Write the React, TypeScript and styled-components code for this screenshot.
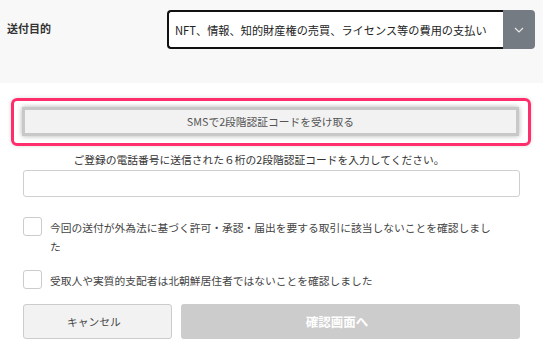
import React from "react";
import styled, { createGlobalStyle } from "styled-components";

const Global = createGlobalStyle`
  html, body { margin: 0; padding: 0; background: #ffffff; }
  body { font-family: "Noto Sans CJK JP", "Noto Sans", sans-serif; color: #333; }
  * { box-sizing: border-box; }
`;

const TopSection = styled.div`
  height: 83px;
  background: #f8f8f8;
  display: flex;
  align-items: flex-start;
  padding: 10px 8px 0 7px;
`;

const Label = styled.div`
  width: 160px;
  font-size: 11px;
  font-weight: 700;
  color: #333;
  line-height: 18px;
  margin-top: 9px;
`;

const SelectWrap = styled.div`
  display: flex;
  width: 368px;
  height: 39px;
`;

const SelectBox = styled.div`
  flex: 1;
  border: 2px solid #111;
  border-right: none;
  border-radius: 4px 0 0 4px;
  background: #fff;
  display: flex;
  align-items: center;
  padding-left: 6px;
  font-size: 11.2px;
  color: #222;
  white-space: nowrap;
  overflow: hidden;
`;

const SelectArrow = styled.div`
  width: 32px;
  background: #757b82;
  border-radius: 0 4px 4px 0;
  display: flex;
  align-items: center;
  justify-content: center;
`;

const Main = styled.div`
  padding: 15px 0 0 0;
`;

const Highlight = styled.div`
  width: 520px;
  margin-left: 11px;
  border: 3px solid #ff2d6b;
  border-radius: 6px;
  padding: 6px 9px 7px 8px;
  box-shadow: 0 0 4px rgba(0, 0, 0, 0.15);
`;

const SmsButton = styled.button`
  display: block;
  width: 497px;
  height: 29px;
  border: 3px solid #c8c8c8;
  background: #f2f2f2;
  box-shadow: 0 0 5px rgba(0, 0, 0, 0.3);
  font-family: inherit;
  font-size: 10.75px;
  color: #555;
  padding: 0;
  line-height: 23px;
`;

const Content = styled.div`
  margin-left: 23px;
  width: 497px;
`;

const Note = styled.div`
  margin-top: 4px;
  font-size: 10.75px;
  line-height: 19px;
  color: #333;
  text-align: center;
  padding-right: 25px;
`;

const CodeInput = styled.input`
  display: block;
  margin-top: 1px;
  width: 497px;
  height: 27px;
  border: 1px solid #cfcfcf;
  border-radius: 3px;
  background: #fff;
  outline: none;
`;

const CheckRow = styled.label<{ $mt: number }>`
  display: flex;
  align-items: flex-start;
  gap: 8px;
  margin-top: ${(p) => p.$mt}px;
`;

const CheckBox = styled.span`
  flex: none;
  width: 19px;
  height: 19px;
  border: 1px solid #cccccc;
  border-radius: 3px;
  background: #fff;
`;

const CheckText = styled.span`
  font-size: 10.75px;
  line-height: 19px;
  color: #444;
  padding-top: 1px;
  width: 446px;
`;

const ButtonRow = styled.div`
  display: flex;
  gap: 9px;
  margin-top: 14px;
  width: 497px;
`;

const CancelButton = styled.button`
  width: 149px;
  height: 35px;
  background: #f2f2f2;
  border: 1px solid #cccccc;
  border-radius: 3px;
  font-family: inherit;
  font-size: 10.75px;
  color: #444;
  padding: 0 7px 0 0;
`;

const ConfirmButton = styled.button`
  width: 339px;
  height: 35px;
  background: #cccccc;
  border: none;
  border-radius: 3px;
  font-family: inherit;
  font-size: 12.5px;
  font-weight: 700;
  color: #fff;
  padding: 0 27px 0 0;
`;

export default function App() {
  return (
    <>
      <Global />
      <TopSection>
        <Label>送付目的</Label>
        <SelectWrap>
          <SelectBox>NFT、情報、知的財産権の売買、ライセンス等の費用の支払い</SelectBox>
          <SelectArrow>
            <svg width="10" height="6" viewBox="0 0 10 6" fill="none">
              <path d="M1 1l4 4 4-4" stroke="#e6e8ea" strokeWidth="1.2" />
            </svg>
          </SelectArrow>
        </SelectWrap>
      </TopSection>
      <Main>
        <Highlight>
          <SmsButton>SMSで2段階認証コードを受け取る</SmsButton>
        </Highlight>
        <Content>
          <Note>ご登録の電話番号に送信された６桁の2段階認証コードを入力してください。</Note>
          <CodeInput />
          <CheckRow $mt={20}>
            <CheckBox />
            <CheckText>今回の送付が外為法に基づく許可・承認・届出を要する取引に該当しないことを確認しました</CheckText>
          </CheckRow>
          <CheckRow $mt={14}>
            <CheckBox />
            <CheckText>受取人や実質的支配者は北朝鮮居住者ではないことを確認しました</CheckText>
          </CheckRow>
          <ButtonRow>
            <CancelButton>キャンセル</CancelButton>
            <ConfirmButton>確認画面へ</ConfirmButton>
          </ButtonRow>
        </Content>
      </Main>
    </>
  );
}
